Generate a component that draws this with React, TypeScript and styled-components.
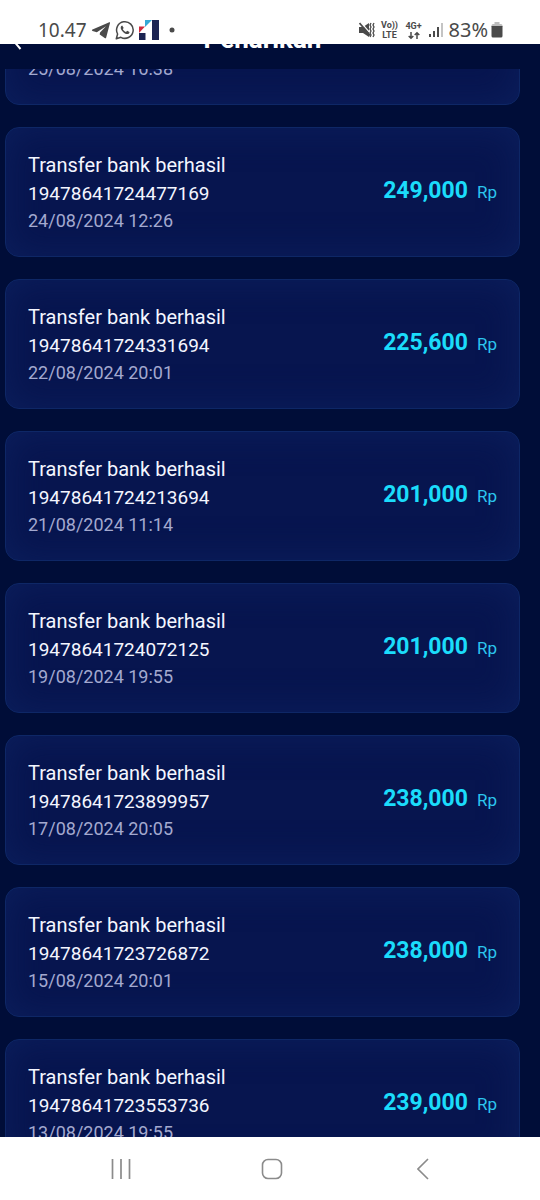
import React, { useLayoutEffect, useRef } from 'react';
import styled, { createGlobalStyle } from 'styled-components';

const GlobalStyle = createGlobalStyle`
  *, *::before, *::after { box-sizing: border-box; }
  body { margin: 0; background: #000d38; font-family: Roboto, sans-serif; }
  ul, p, h1 { margin: 0; padding: 0; }
  button { border: 0; padding: 0; background: none; cursor: pointer; }
`;

const Screen = styled.div`
  display: flex;
  flex-direction: column;
  height: 100vh;
  background: #000d38;
`;

const StatusBar = styled.div`
  display: flex;
  flex: none;
  justify-content: space-between;
  align-items: flex-end;
  height: 44px;
  padding: 0 37px 2px 38px;
  background: #fff;
  color: #4a4a4a;
  font-family: "Noto Sans", "Open Sans", sans-serif;
`;

const StatusGroup = styled.div<{ $gap: number }>`
  display: flex;
  align-items: center;
  height: 24px;
  gap: ${({ $gap }) => $gap}px;
`;

const Clock = styled.time`
  width: 49px;
  font-size: 19px;
  line-height: 24px;
`;

const Battery = styled.span`
  display: flex;
  align-items: center;
  gap: 3px;
  font-size: 20px;
  line-height: 24px;
`;

const Network = styled.span`
  display: flex;
  flex-direction: column;
  align-items: center;
  width: 18px;
  font: 700 9px/10px Roboto, sans-serif;
  white-space: nowrap;
`;

const Header = styled.header`
  display: grid;
  flex: none;
  grid-template-columns: 48px 1fr 48px;
  align-content: end;
  height: 25px;
  padding: 0 17px 15px 2px;
  overflow: hidden;
  color: #fff;
`;

const BackButton = styled.button`
  display: flex;
  height: 30px;
  padding-left: 9px;
  color: #fff;
`;

const Title = styled.h1`
  font-size: 26px;
  font-weight: 700;
  line-height: 30px;
  text-align: center;
`;

const Feed = styled.main`
  flex: 1;
  min-height: 0;
  overflow-y: auto;
  scrollbar-width: none;
`;

const List = styled.ul`
  display: flex;
  flex-direction: column;
  gap: 22px;
  padding: 0 20px 0 5px;
  list-style: none;
`;

const Card = styled.li`
  display: flex;
  justify-content: space-between;
  align-items: center;
  padding: 23px 22px;
  border: 1px solid #0e2766;
  border-radius: 14px;
  background: #07154f;
  box-shadow: inset 0 0 36px #0c1f5d;
`;

const Kind = styled.p`
  color: #f4f6ff;
  font-size: 20px;
  line-height: 28px;
`;

const Reference = styled.p`
  color: #f4f6ff;
  font-size: 19px;
  line-height: 30px;
`;

const Stamp = styled.time`
  display: block;
  color: #a3a9cf;
  font-size: 18px;
  line-height: 24px;
`;

const Amount = styled.p`
  display: flex;
  align-items: baseline;
  gap: 9px;
  padding-bottom: 2px;
  color: #1bdcfb;
  font-size: 23px;
  font-weight: 700;
  line-height: 28px;
`;

const Currency = styled.span`
  color: #2cc6ee;
  font-size: 17px;
  font-weight: 400;
`;

const NavBar = styled.nav`
  display: grid;
  flex: none;
  grid-template-columns: repeat(3, 1fr);
  height: 63px;
  padding: 0 41px 0 45px;
  background: #fff;
`;

const NavButton = styled.button`
  display: flex;
  align-items: center;
  justify-content: center;
  color: #8b8b8b;
`;

const transfers = [
  { id: '19478641724563240', at: '25/08/2024 16:38', amount: '249,000' },
  { id: '19478641724477169', at: '24/08/2024 12:26', amount: '249,000' },
  { id: '19478641724331694', at: '22/08/2024 20:01', amount: '225,600' },
  { id: '19478641724213694', at: '21/08/2024 11:14', amount: '201,000' },
  { id: '19478641724072125', at: '19/08/2024 19:55', amount: '201,000' },
  { id: '19478641723899957', at: '17/08/2024 20:05', amount: '238,000' },
  { id: '19478641723726872', at: '15/08/2024 20:01', amount: '238,000' },
  { id: '19478641723553736', at: '13/08/2024 19:55', amount: '239,000' },
];

const TelegramIcon = () => (
  <svg width="20" height="18" viewBox="0 0 20 18" fill="currentColor" aria-hidden="true">
    <path d="M18.300 1.300 1.500 8.600c-.8.4-.8 1 0 1.300l4.300 1.300L15 5.200 9 11.500l-.3 2 5 3.600c.7.4 1.300.2 1.500-.7L19 2.100c.2-.8-.1-1.100-.7-.8Z" />
  </svg>
);

const WhatsAppIcon = () => (
  <svg width="20" height="20" viewBox="0 0 20 20" fill="none" aria-hidden="true">
    <path d="M1.300 18.700 2.600 14a8.300 8.300 0 1 1 3.300 3.300Z" stroke="currentColor" strokeWidth="1.500" strokeLinejoin="round" />
    <path d="M7.200 5.500c-.4 0-1.500.7-1.500 2.200 0 2.300 3.700 6.400 6.500 6.400 1.400 0 2.400-1 2.300-2.100l-2.300-1.200-1.200 1.300c-1.500-.6-2.700-1.700-3.200-3L8.700 8Z" fill="currentColor" />
  </svg>
);

const BankIcon = () => (
  <svg width="20" height="20" viewBox="0 0 20 20" aria-hidden="true">
    <path d="M13 0h7v20h-7Z" fill="#1c2452" />
    <path d="M0 13h6.500v7H0Z" fill="#1c2452" />
    <path d="M6 0h7L6 7Z" fill="#35a9d6" />
    <path d="M0 6.500h6L0 13Z" fill="#cf2b3c" />
  </svg>
);

const MuteIcon = () => (
  <svg width="16" height="16" viewBox="0 0 16 16" fill="none" stroke="currentColor" aria-hidden="true">
    <path d="M0 5h4L10 1v14l-6-4H0Z" fill="currentColor" stroke="none" />
    <path d="M1.500 0 12 12" stroke="#fff" strokeWidth="1.200" />
    <path d="m.5 1 10.500 12.500" strokeWidth="1.800" />
    <path d="m12 1-1 2 1 2-1 2 1 2-1 2 1 2-1 2M15 1l-1 2 1 2-1 2 1 2-1 2 1 2-1 2" strokeWidth="1.300" />
  </svg>
);

const DataArrows = () => (
  <svg width="12" height="9" viewBox="0 0 12 9" fill="none" stroke="currentColor" strokeWidth="1.500" aria-hidden="true">
    <path d="M3 1v6M.7 5 3 7.300 5.300 5M9 8V2M6.700 4 9 1.700 11.300 4" />
  </svg>
);

const SignalIcon = () => (
  <svg width="14" height="16" viewBox="0 0 14 16" fill="currentColor" aria-hidden="true">
    <path d="M0 12h2v3H0ZM4 9h2v6H4ZM8 5h2v10H8Z" />
    <path d="M12 1h2v14h-2Z" fill="#c4c4c4" />
  </svg>
);

const BatteryIcon = () => (
  <svg width="12" height="16" viewBox="0 0 12 16" aria-hidden="true">
    <path d="M3.500 0h5v2H10a1.500 1.500 0 0 1 1.500 1.500V5H.5V3.500A1.500 1.500 0 0 1 2 2h1.500Z" fill="#bdbdbd" />
    <path d="M.5 4h11v10a1.500 1.500 0 0 1-1.500 1.500H2A1.500 1.500 0 0 1 .5 14Z" fill="currentColor" />
  </svg>
);

export default function App() {
  const feed = useRef<HTMLElement>(null);

  useLayoutEffect(() => {
    if (feed.current) feed.current.scrollTop = 94;
  }, []);

  return (
    <>
      <GlobalStyle />
      <Screen>
        <StatusBar>
          <StatusGroup $gap={4}>
            <Clock>10.47</Clock>
            <TelegramIcon />
            <WhatsAppIcon />
            <BankIcon />
            <svg width="24" height="6" viewBox="0 0 24 6" fill="currentColor" aria-hidden="true">
              <circle cx="9" cy="3" r="2.500" />
            </svg>
          </StatusGroup>
          <StatusGroup $gap={6}>
            <MuteIcon />
            <Network>
              <span>Vo))</span>
              <span>LTE</span>
            </Network>
            <Network>
              <span>4G+</span>
              <DataArrows />
            </Network>
            <SignalIcon />
            <Battery>
              83%
              <BatteryIcon />
            </Battery>
          </StatusGroup>
        </StatusBar>
        <Header>
          <BackButton type="button" aria-label="Kembali">
            <svg width="12" height="26" viewBox="0 0 12 26" fill="none" stroke="currentColor" strokeWidth="2" aria-hidden="true">
              <path d="M9.500 5 1 15l8.500 10" />
            </svg>
          </BackButton>
          <Title>Penarikan</Title>
        </Header>
        <Feed ref={feed}>
          <List>
            {transfers.map((t) => (
              <Card key={t.id}>
                <div>
                  <Kind>Transfer bank berhasil</Kind>
                  <Reference>{t.id}</Reference>
                  <Stamp>{t.at}</Stamp>
                </div>
                <Amount>
                  {t.amount}
                  <Currency>Rp</Currency>
                </Amount>
              </Card>
            ))}
          </List>
        </Feed>
        <NavBar>
          <NavButton type="button" aria-label="Aplikasi terbaru">
            <svg width="20" height="20" viewBox="0 0 20 20" stroke="currentColor" strokeWidth="1.700" aria-hidden="true">
              <path d="M1.500 0v20M10 0v20M18.500 0v20" />
            </svg>
          </NavButton>
          <NavButton type="button" aria-label="Beranda">
            <svg width="22" height="22" viewBox="0 0 22 22" fill="none" stroke="currentColor" strokeWidth="1.600" aria-hidden="true">
              <rect x="1.500" y="1.500" width="19" height="19" rx="5.500" />
            </svg>
          </NavButton>
          <NavButton type="button" aria-label="Kembali ke layar sebelumnya">
            <svg width="12" height="22" viewBox="0 0 12 22" fill="none" stroke="currentColor" strokeWidth="1.600" aria-hidden="true">
              <path d="M11 1 1 11l10 10" />
            </svg>
          </NavButton>
        </NavBar>
      </Screen>
    </>
  );
}
